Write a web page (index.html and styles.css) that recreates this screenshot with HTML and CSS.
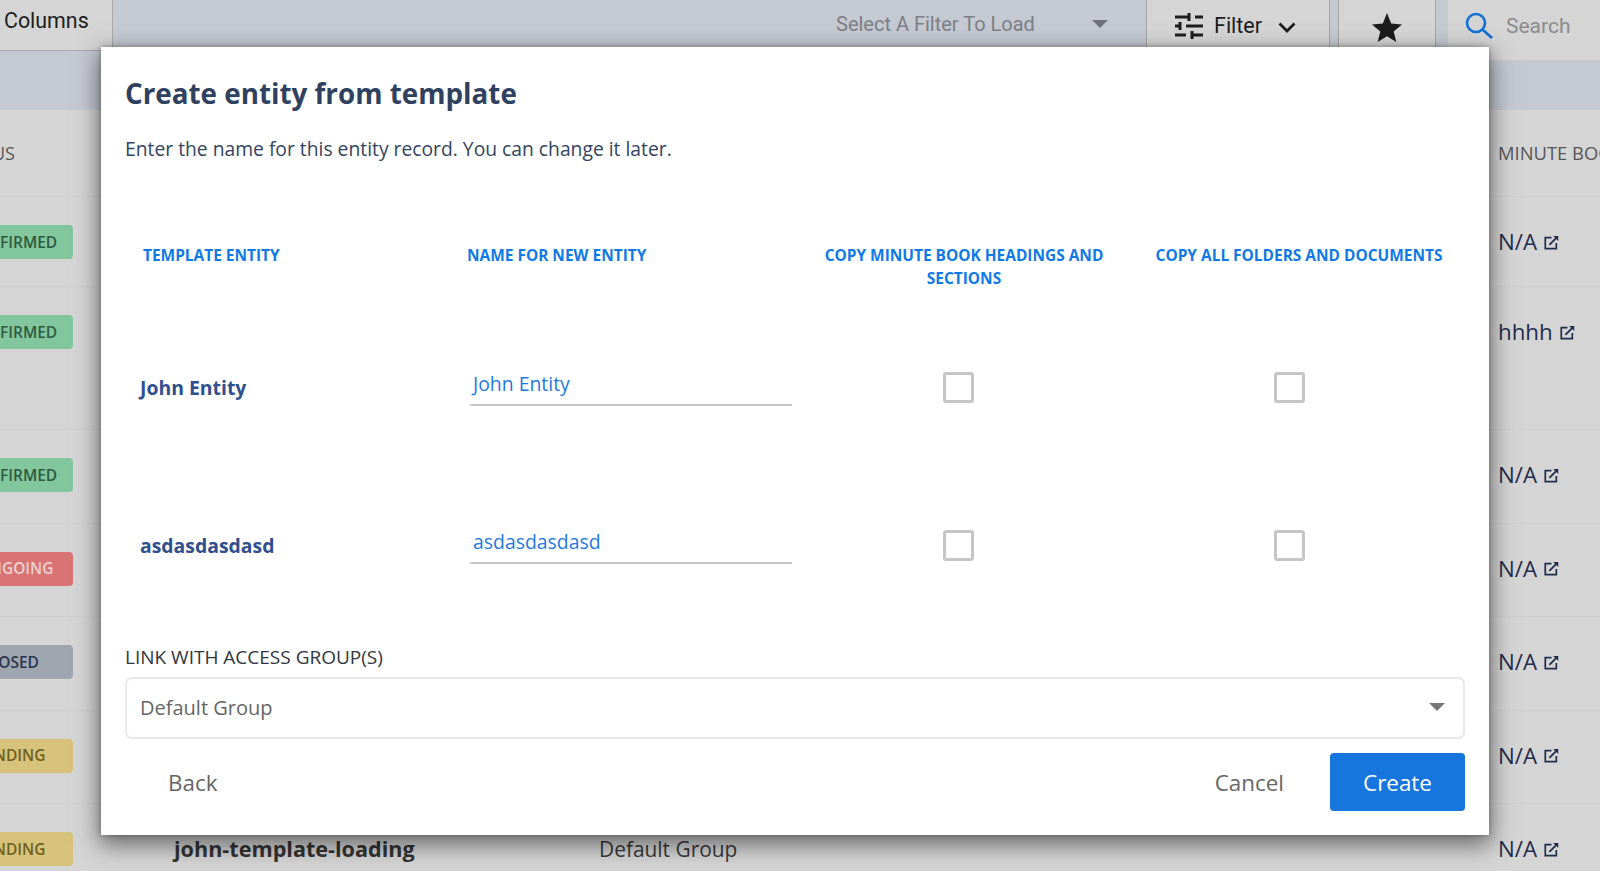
FILE: index.html
```html
<!DOCTYPE html>
<html lang="en">
<head>
<meta charset="utf-8">
<title>Create entity from template</title>
<link rel="stylesheet" href="styles.css">
</head>
<body>
<svg class="sprites" width="0" height="0" aria-hidden="true">
  <symbol id="ext" viewBox="0 0 14 14">
    <path d="M7 2.500H1.200v10.300h10.300V7.500" fill="none" stroke="currentColor" stroke-width="1.600"/>
    <path d="M5 9.200 12.200 2" fill="none" stroke="currentColor" stroke-width="1.700"/>
    <path d="M8.600 1H13.300V5.700Z" fill="currentColor"/>
  </symbol>
</svg>
<div class="page">
  <header class="toolbar">
    <div class="columns-btn">Columns</div>
    <div class="filter-load">
      <span>Select A Filter To Load</span>
      <i class="caret caret-dim"></i>
    </div>
    <div class="tool-cell filter-cell">
      <svg class="tune" width="28" height="28" viewBox="0 0 28 28"><path d="M0 5h14M20 5h8M14 1v8M0 14h5M11 14h17M5 10v8M0 23h11M17 23h11M17 19v8" fill="none" stroke="#1c1c1c" stroke-width="3"/></svg>
      <span class="filter-label">Filter</span>
      <svg class="chev" width="18" height="11" viewBox="0 0 18 11"><path d="M1.500 1.500 9 9l7.500-7.500" fill="none" stroke="#1c1c1c" stroke-width="2.800"/></svg>
    </div>
    <div class="tool-cell star-cell">
      <svg width="30" height="29" viewBox="0 0 30 29"><path d="M15 0l4.200 10.600L30 11.400l-8.300 7.100L24.300 29 15 23.200 5.700 29l2.600-10.500L0 11.400l10.800-.8z" fill="#1c1c1c"/></svg>
    </div>
    <div class="search-cell">
      <svg width="28" height="27" viewBox="0 0 28 27"><circle cx="11" cy="11" r="9" fill="none" stroke="#1272d6" stroke-width="2.600"/><path d="M17.500 17.500 27 26" fill="none" stroke="#1272d6" stroke-width="2.800"/></svg>
      <span>Search</span>
    </div>
  </header>
  <section class="table">
    <div class="row head-row">
      <div class="status-head">STATUS</div><div></div><div></div>
      <div class="minute-head">MINUTE BOOK</div>
    </div>
    <div class="row r1"><div class="badge green">CONFIRMED</div><div></div><div></div><div class="link-cell">N/A <svg class="ext"><use href="#ext"/></svg></div></div>
    <div class="row r2"><div class="badge green">CONFIRMED</div><div></div><div></div><div class="link-cell">hhhh <svg class="ext"><use href="#ext"/></svg></div></div>
    <div class="row r3"><div class="badge green">CONFIRMED</div><div></div><div></div><div class="link-cell">N/A <svg class="ext"><use href="#ext"/></svg></div></div>
    <div class="row r3"><div class="badge red">ONGOING</div><div></div><div></div><div class="link-cell">N/A <svg class="ext"><use href="#ext"/></svg></div></div>
    <div class="row r3"><div class="badge grey">CLOSED</div><div></div><div></div><div class="link-cell">N/A <svg class="ext"><use href="#ext"/></svg></div></div>
    <div class="row r3"><div class="badge yellow">PENDING</div><div></div><div></div><div class="link-cell">N/A <svg class="ext"><use href="#ext"/></svg></div></div>
    <div class="row r3"><div class="badge yellow">PENDING</div><div class="name-cell">john-template-loading</div><div class="group-cell">Default Group</div><div class="link-cell">N/A <svg class="ext"><use href="#ext"/></svg></div></div>
  </section>

  <div class="modal" role="dialog">
    <h2 class="title">Create entity from template</h2>
    <p class="subtitle">Enter the name for this entity record. You can change it later.</p>
    <div class="entity-grid">
      <div class="th th-template">TEMPLATE ENTITY</div>
      <div class="th th-name">NAME FOR NEW ENTITY</div>
      <div class="th th-copy-a">COPY MINUTE BOOK HEADINGS AND SECTIONS</div>
      <div class="th th-copy-b">COPY ALL FOLDERS AND DOCUMENTS</div>

      <div class="entity-name">John Entity</div>
      <div class="name-input">John Entity</div>
      <div class="check-cell check-a"><span class="check"></span></div>
      <div class="check-cell check-b"><span class="check"></span></div>

      <div class="entity-name alt">asdasdasdasd</div>
      <div class="name-input">asdasdasdasd</div>
      <div class="check-cell check-a"><span class="check"></span></div>
      <div class="check-cell check-b"><span class="check"></span></div>
    </div>
    <div class="group-label">LINK WITH ACCESS GROUP(S)</div>
    <div class="group-select"><span>Default Group</span><i class="caret"></i></div>
    <div class="actions">
      <span class="btn back">Back</span>
      <span class="btn cancel">Cancel</span>
      <span class="btn create">Create</span>
    </div>
  </div>
</div>
</body>
</html>
```
FILE: styles.css
```css
* { box-sizing: border-box; }
html, body { margin: 0; padding: 0; }
body { font-family: "Open Sans", "Liberation Sans", sans-serif; background: #d5d5d5; }
.sprites { position: absolute; }
.page { position: relative; width: 1600px; height: 871px; overflow: hidden; background: #d5d5d5; }

.toolbar { height: 110px; background: #c5c9d2; display: flex; align-items: flex-start; font-family: Roboto, "Liberation Sans", sans-serif; }
.columns-btn { width: 113px; height: 51px; background: #d5d5d5; border-right: 1px solid #a9a9a9; border-bottom: 1px solid #a9a9a9; padding: 8px 0 0 4px; font-size: 21.400px; line-height: 26px; color: #1d1d1d; }
.filter-load { margin-left: 723px; width: 310px; height: 48px; display: flex; align-items: center; justify-content: space-between; padding-right: 38px; font-size: 20px; color: #7c8087; }
.caret { display: block; width: 0; height: 0; border-left: 8px solid transparent; border-right: 8px solid transparent; border-top: 8px solid #777; }
.caret-dim { border-top-color: #6f7278; }
.tool-cell { height: 60px; background: #d5d5d5; border-left: 1px solid #a5a5a5; border-right: 1px solid #a5a5a5; display: flex; }
.filter-cell { width: 184px; padding: 12px 0 0 28px; align-items: flex-start; }
.filter-label { font-size: 21.500px; line-height: 28px; margin-left: 11px; color: #1d1d1d; }
.chev { margin: 10px 0 0 16px; }
.star-cell { width: 98px; margin-left: 8px; justify-content: center; padding-top: 13px; }
.search-cell { margin-left: 12px; width: 152px; height: 60px; background: #d5d5d5; display: flex; align-items: flex-start; padding: 12px 0 0 17px; font-size: 21px; line-height: 28px; color: #8b8b8b; }
.search-cell span { margin-left: 13px; }

.row { display: grid; grid-template-columns: 174px 425px 1fr 102px; border-bottom: 1px solid #cfcfd3; }
.head-row { height: 87px; padding-top: 30px; font-size: 18px; line-height: 26px; color: #565656; }
.status-head { width: 15px; display: flex; justify-content: flex-end; overflow: hidden; white-space: nowrap; }
.minute-head { white-space: nowrap; font-size: 18.400px; }
.r1 { height: 90px; padding-top: 28px; }
.r2 { height: 143px; padding-top: 28px; }
.r3 { height: 93.500px; padding-top: 28px; }
.badge { width: 122px; height: 34px; margin-left: -49.500px; padding-bottom: 1px; border-radius: 4px; display: flex; justify-content: center; align-items: center; font-size: 15.500px; font-weight: 600; white-space: nowrap; }
.green { background: #82c69e; color: #2d5b40; }
.red { background: #d87474; color: #f0d0d0; padding-left: 8px; }
.grey { background: #a0a6b0; color: #2b3650; padding-right: 4px; }
.yellow { background: #d7c27c; color: #6f6120; padding-right: 2px; }
.link-cell { height: 34px; align-self: start; font-size: 22.300px; line-height: 34px; color: #1f2d4d; white-space: nowrap; display: flex; align-items: center; gap: 7px; }
.ext { width: 15px; height: 15px; color: #1f2d4d; }
.name-cell { font-size: 21.600px; font-weight: 700; line-height: 34px; color: #333; white-space: nowrap; }
.group-cell { font-size: 20.900px; line-height: 34px; color: #3a3a3a; }

.modal { position: absolute; left: 101px; top: 47px; width: 1388px; height: 788px; background: #fff; padding: 24px 24px 0; box-shadow: 0 8px 22px 2px rgba(0,0,0,.5), 0 0 5px rgba(0,0,0,.3); color: #30415f; }
.title { margin: 0; font-size: 27.800px; line-height: 44px; font-weight: 700; color: #30415f; }
.subtitle { margin: 19px 0 0; font-size: 19.300px; line-height: 30px; color: #33445f; }
.entity-grid { margin-top: 80px; display: grid; grid-template-columns: 341px 348px 300px 1fr; grid-template-rows: 78px 158px 164px; }
.th { font-size: 15.450px; font-weight: 700; line-height: 23px; color: #0f7ae5; }
.th-template { padding-left: 18px; }
.th-name { padding-left: 1px; }
.th-copy-a { text-align: center; }
.th-copy-b { text-align: center; padding-left: 19px; }
.entity-name { font-size: 19.400px; font-weight: 700; color: #2f4f8e; padding: 52px 0 0 15px; line-height: 28px; }
.name-input { width: 322px; height: 84px; margin-left: 4px; padding: 48px 0 0 3px; border-bottom: 2px solid #c8c8c8; font-size: 19.400px; line-height: 28px; color: #1f7ae0; }
.check-cell { padding-top: 50px; }
.check-a { padding-left: 129px; }
.check-b { padding-left: 160px; }
.check { display: block; width: 31px; height: 31px; border: 3px solid #c6c6c6; border-radius: 3px; }
.group-label { font-size: 19px; line-height: 26px; color: #30363f; }
.group-select { margin-top: 7px; height: 62px; border: 2px solid #e8e8e8; border-radius: 7px; display: flex; align-items: center; justify-content: space-between; padding: 0 18px 2px 13px; font-size: 20px; color: #666; }
.actions { margin-top: 14px; display: flex; align-items: center; height: 58px; }
.btn { font-size: 22.400px; line-height: 30px; color: #666; padding-top: 2px; }
.back { margin-left: 43px; }
.cancel { margin-left: auto; margin-right: 46px; }
.create { width: 135px; height: 58px; background: #1676de; color: #fff; border-radius: 4px; display: flex; align-items: center; justify-content: center; }
```
